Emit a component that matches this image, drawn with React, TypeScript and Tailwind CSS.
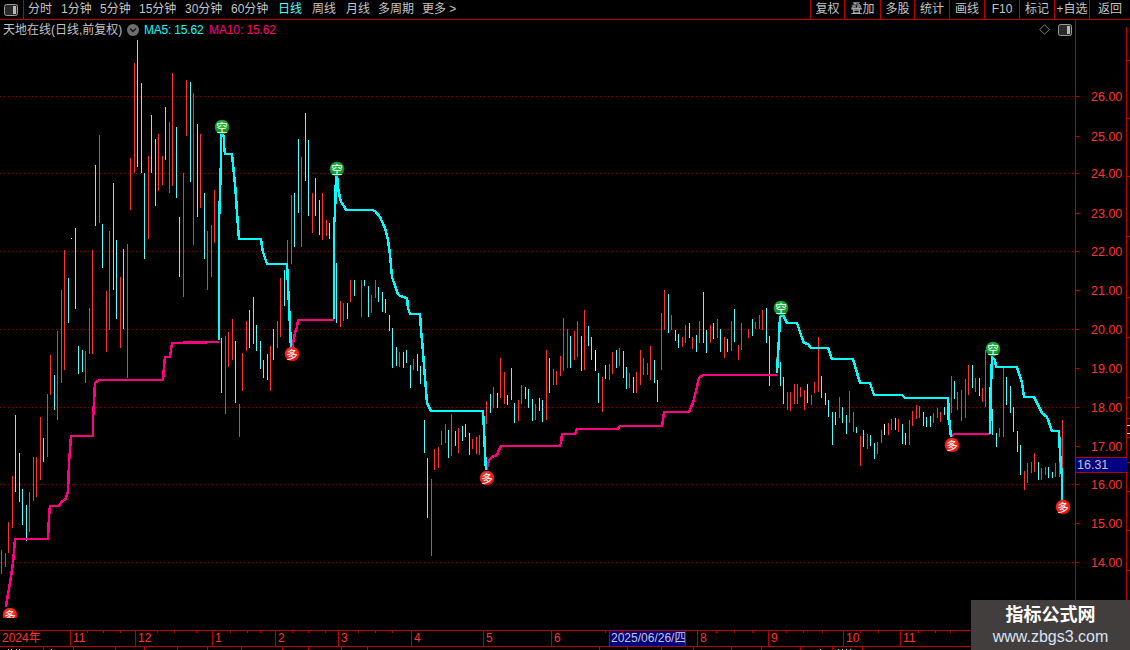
import React from "react";

type Wick = [number, number, number, string];

const leftTabs = [
  { label: "分时", cls: "w-[33px] text-[#c4c4c4]" },
  { label: "1分钟", cls: "w-[39px] text-[#c4c4c4]" },
  { label: "5分钟", cls: "w-[39px] text-[#c4c4c4]" },
  { label: "15分钟", cls: "w-[46px] text-[#c4c4c4]" },
  { label: "30分钟", cls: "w-[46px] text-[#c4c4c4]" },
  { label: "60分钟", cls: "w-[47px] text-[#c4c4c4]" },
  { label: "日线", cls: "w-[34px] text-[#54fcfc]" },
  { label: "周线", cls: "w-[34px] text-[#c4c4c4]" },
  { label: "月线", cls: "w-[32px] text-[#c4c4c4]" },
  { label: "多周期", cls: "w-[44px] text-[#c4c4c4]" },
  { label: "更多 >", cls: "w-[40px] text-[#c4c4c4]" },
];

const rightTabs = [
  { label: "复权", cls: "w-[34px]" },
  { label: "叠加", cls: "w-[36px]" },
  { label: "多股", cls: "w-[34px]" },
  { label: "统计", cls: "w-[35px]" },
  { label: "画线", cls: "w-[35px]" },
  { label: "F10", cls: "w-[35px]" },
  { label: "标记", cls: "w-[35px]" },
  { label: "+自选", cls: "w-[35px]" },
  { label: "返回", cls: "w-[41px]" },
];

const dateCells = [
  { label: "2024年", cls: "w-[71px]" },
  { label: "11", cls: "w-[65px]" },
  { label: "12", cls: "w-[77px]" },
  { label: "1", cls: "w-[63px]" },
  { label: "2", cls: "w-[63px]" },
  { label: "3", cls: "w-[73px]" },
  { label: "4", cls: "w-[72px]" },
  { label: "5", cls: "w-[68px]" },
  { label: "6", cls: "w-[58px]" },
  { label: "2025/06/26/四", cls: "w-[76px] bg-[#000080] !text-[#c8c8c8] !pl-[1px]" },
  { label: "", cls: "w-[12px]" },
  { label: "8", cls: "w-[71px]" },
  { label: "9", cls: "w-[75px]" },
  { label: "10", cls: "w-[57px]" },
  { label: "11", cls: "w-[229px]" },
];

const axisLabels: [string, number][] = [
  ["26.00", 96],
  ["25.00", 136],
  ["24.00", 173],
  ["23.00", 213],
  ["22.00", 251],
  ["21.00", 290],
  ["20.00", 329],
  ["19.00", 368],
  ["18.00", 407],
  ["17.00", 446],
  ["16.00", 484],
  ["15.00", 523],
  ["14.00", 562],
];

// absolute px
const wicksA: Wick[] = [
  [1, 550, 574, "r"], [5, 553, 567, "r"], [8, 522, 553, "r"], [12, 476, 528, "r"], [15, 415, 492, "c"],
  [19, 453, 502, "c"], [22, 489, 525, "c"], [26, 505, 541, "c"], [29, 492, 532, "r"], [33, 457, 501, "r"],
  [36, 457, 497, "r"], [40, 417, 480, "r"], [43, 438, 462, "c"], [47, 394, 457, "r"], [50, 355, 395, "r"],
  [54, 375, 410, "c"], [57, 331, 420, "r"], [61, 290, 383, "r"], [64, 250, 370, "r"], [68, 278, 323, "c"],
  [71, 238, 239, "w"], [75, 228, 309, "c"], [78, 346, 374, "c"], [82, 350, 372, "c"], [85, 351, 383, "r"],
  [89, 308, 354, "r"], [92, 250, 354, "r"], [95, 165, 226, "c"], [99, 135, 223, "r"], [102, 224, 268, "c"],
  [106, 291, 352, "r"], [109, 231, 330, "r"], [113, 183, 290, "c"], [116, 240, 319, "c"], [120, 277, 348, "r"],
  [123, 249, 329, "c"], [127, 244, 378, "r"], [130, 158, 210, "r"], [134, 63, 173, "r"], [137, 40, 167, "c"],
  [141, 83, 173, "c"], [144, 173, 259, "c"], [148, 156, 239, "r"], [151, 115, 173, "c"], [155, 139, 206, "c"],
  [158, 134, 191, "r"], [162, 156, 185, "r"], [165, 107, 160, "c"], [169, 122, 193, "r"], [172, 73, 186, "r"],
  [176, 127, 198, "c"], [179, 217, 277, "c"], [183, 173, 297, "r"], [186, 80, 136, "r"], [190, 82, 182, "c"],
  [193, 93, 245, "r"], [197, 124, 217, "c"], [200, 134, 208, "r"], [204, 193, 259, "c"], [207, 231, 290, "r"],
  [211, 225, 277, "r"], [214, 190, 243, "r"], [221, 338, 393, "c"], [225, 336, 414, "r"], [228, 332, 367, "r"],
  [232, 319, 360, "r"], [235, 341, 403, "c"], [239, 404, 437, "r"], [242, 353, 391, "r"], [246, 321, 351, "r"],
  [249, 310, 348, "c"], [253, 297, 344, "c"], [256, 325, 351, "c"], [260, 341, 369, "c"], [263, 360, 378, "c"],
  [267, 354, 380, "c"], [270, 346, 391, "r"], [273, 329, 360, "c"], [277, 321, 348, "r"], [280, 278, 337, "r"],
  [284, 270, 306, "c"], [287, 240, 293, "r"], [291, 195, 264, "r"], [294, 193, 247, "c"], [298, 139, 213, "c"],
  [301, 157, 247, "r"], [305, 113, 181, "c"], [308, 140, 216, "c"], [312, 193, 233, "r"], [315, 178, 216, "c"],
  [319, 200, 235, "c"], [322, 193, 240, "r"], [326, 220, 236, "r"], [329, 223, 239, "c"], [336, 263, 323, "c"],
  [340, 301, 327, "r"], [343, 303, 321, "r"], [347, 303, 319, "c"],
];

// measured on a 3x crop from (340,280)
const wicksB: Wick[] = [
  [30, 0, 65, "r"], [42, 0, 47, "c"], [63, 0, 110, "r"], [72, 0, 18, "c"], [85, 18, 110, "c"], [94, 45, 100, "r"],
  [105, 0, 55, "r"], [115, 20, 65, "c"], [127, 35, 95, "c"], [136, 57, 100, "c"], [148, 105, 152, "c"],
  [157, 145, 263, "c"], [168, 200, 258, "c"], [178, 215, 262, "r"], [190, 215, 265, "c"], [199, 210, 250, "c"],
  [211, 255, 325, "c"], [220, 237, 270, "r"], [232, 222, 272, "c"], [241, 258, 312, "c"], [253, 420, 520, "c"],
  [262, 535, 715, "c"], [274, 598, 828, "r"], [283, 507, 570, "r"], [295, 500, 565, "r"], [304, 453, 495, "r"],
  [316, 433, 488, "r"], [325, 450, 533, "c"], [334, 402, 528, "r"], [346, 453, 498, "c"], [355, 443, 518, "r"],
  [367, 438, 483, "c"], [376, 432, 470, "c"], [388, 460, 525, "c"], [397, 477, 507, "r"], [408, 470, 522, "r"],
  [418, 465, 525, "r"], [439, 363, 433, "r"], [451, 342, 398, "c"], [460, 321, 385, "r"], [472, 338, 385, "c"],
  [481, 235, 353, "r"], [493, 275, 373, "r"], [502, 345, 375, "c"], [514, 265, 360, "c"], [523, 370, 428, "c"],
  [535, 360, 423, "r"], [544, 316, 372, "r"], [556, 322, 357, "c"], [565, 328, 383, "c"], [577, 357, 422, "c"],
  [586, 372, 420, "r"], [598, 355, 392, "c"], [607, 360, 425, "c"], [619, 210, 420, "r"], [628, 235, 338, "c"],
  [640, 267, 315, "r"], [649, 273, 315, "r"], [661, 228, 288, "r"], [670, 114, 272, "r"], [682, 148, 265, "r"],
  [691, 168, 265, "c"], [703, 152, 240, "r"], [712, 122, 230, "r"], [724, 168, 272, "c"], [733, 90, 270, "r"],
  [745, 138, 198, "c"], [754, 172, 240, "c"], [766, 210, 272, "w"], [775, 278, 368, "c"], [787, 292, 395, "r"],
  [796, 255, 298, "c"], [808, 252, 300, "r"], [817, 216, 282, "r"], [829, 210, 265, "c"], [838, 205, 257, "r"],
  [850, 213, 293, "c"], [859, 262, 327, "c"], [868, 280, 325, "r"], [880, 292, 338, "c"], [889, 275, 340, "r"],
  [901, 210, 315, "r"], [910, 235, 285, "r"], [922, 250, 285, "r"], [931, 198, 300, "r"], [943, 240, 310, "c"],
  [952, 300, 365, "c"], [964, 98, 270, "r"], [973, 30, 150, "r"], [985, 42, 158, "c"], [994, 105, 150, "r"],
  [1006, 150, 182, "c"], [1015, 162, 203, "c"],
];

// measured on a 3x crop from (680,280)
const wicksC: Wick[] = [
  [6, 170, 202, "r"], [16, 135, 190, "r"], [28, 130, 175, "c"], [37, 170, 208, "r"], [49, 165, 215, "c"],
  [58, 123, 188, "r"], [70, 35, 188, "c"], [79, 150, 218, "c"], [91, 135, 190, "r"], [100, 130, 178, "c"],
  [112, 117, 175, "r"], [121, 148, 215, "c"], [133, 170, 235, "r"], [142, 178, 215, "c"], [154, 123, 213, "r"],
  [163, 87, 185, "c"], [175, 195, 240, "r"], [184, 130, 210, "r"], [205, 148, 175, "r"], [217, 117, 168, "c"],
  [226, 125, 148, "r"], [238, 105, 148, "r"], [247, 90, 150, "r"], [259, 85, 190, "c"], [268, 168, 318, "c"],
  [289, 230, 280, "r"], [301, 245, 318, "c"], [310, 292, 373, "c"], [322, 335, 390, "r"], [331, 335, 392, "r"],
  [343, 312, 372, "r"], [352, 313, 373, "r"], [361, 322, 350, "r"], [373, 330, 390, "r"], [382, 312, 370, "c"],
  [394, 345, 375, "r"], [403, 305, 338, "r"], [415, 170, 335, "r"], [424, 288, 355, "c"], [436, 340, 375, "c"],
  [445, 360, 410, "c"], [457, 395, 495, "c"], [466, 395, 435, "c"], [478, 350, 415, "r"], [487, 380, 430, "c"],
  [499, 405, 462, "c"], [508, 333, 428, "r"], [520, 395, 455, "r"], [529, 440, 460, "c"], [541, 467, 558, "r"],
  [550, 450, 500, "c"], [562, 462, 508, "r"], [571, 465, 498, "c"], [583, 490, 537, "c"], [592, 487, 522, "r"],
  [604, 450, 490, "r"], [613, 432, 465, "w"], [625, 428, 465, "r"], [634, 418, 450, "r"], [646, 415, 450, "c"],
  [655, 418, 455, "r"], [667, 432, 492, "c"], [676, 460, 495, "c"], [688, 420, 495, "r"], [697, 392, 437, "r"],
  [709, 375, 418, "r"], [718, 378, 415, "r"], [730, 397, 437, "c"], [739, 410, 442, "c"], [751, 408, 442, "c"],
  [760, 400, 430, "r"], [772, 385, 415, "r"], [781, 395, 425, "r"], [793, 380, 405, "c"], [802, 355, 420, "c"],
  [814, 288, 400, "r"], [823, 303, 358, "c"], [832, 335, 390, "r"], [844, 330, 422, "r"], [856, 298, 415, "r"],
  [865, 255, 345, "r"], [877, 255, 325, "c"], [886, 295, 335, "r"], [898, 295, 348, "c"], [907, 325, 365, "r"],
  [916, 210, 380, "r"], [928, 320, 460, "c"], [937, 388, 465, "c"], [949, 458, 500, "c"], [958, 445, 470, "r"],
  [970, 265, 470, "r"], [979, 292, 375, "c"], [991, 318, 400, "c"], [1000, 380, 455, "c"], [1012, 453, 515, "c"],
  [1021, 495, 585, "c"], [1033, 572, 630, "r"], [1042, 548, 610, "r"], [1054, 545, 578, "r"], [1063, 520, 575, "r"],
  [1075, 545, 600, "c"], [1084, 565, 600, "r"], [1096, 560, 585, "r"], [1105, 560, 593, "c"], [1117, 575, 593, "c"],
  [1126, 550, 590, "r"], [1138, 530, 590, "r"], [1147, 420, 568, "r"],
];

const wickColor: Record<string, string> = { r: "#ff3232", c: "#54fcfc", w: "#ffffff" };

const allWicks: Wick[] = [
  ...wicksA,
  ...wicksB.map(([x, a, b, c]): Wick => [340 + Math.floor(x / 3), 280 + a / 3, 280 + b / 3, c]),
  ...wicksC.map(([x, a, b, c]): Wick => [680 + Math.floor(x / 3), 280 + a / 3, 280 + b / 3, c]),
];

const cyanLines = [
  "219,340 219,262 219,222 220,194 221,160 221,132 224,137 224,146 225,154 232,154 233,164 234,174 235,184 236,197 237,212 238,226 239,239 261,239 262,246 263,252 265,258 267,264 287,264 288,285 289,305 290,326 291,348",
  "334,319 334,263 334,225 335,214 336,176 338,180 338,188 340,198 341,202 344,206 346,210 372,210 375,211 380,217 385,228 388,240 390,255 392,277 393,280 398,294 400,296 407,298 408,308 410,314 420,314 421,330 422,340 423,352 424,365 425,378 426,390 427,403 429,407 431,411 483,411 484,430 485,453 486,470",
  "777,373 778,355 779,338 780,317 783,315 787,323 797,323 802,338 804,343 808,344 811,348 828,348 832,359 853,359 860,383 870,383 874,395 902,395 905,398 948,398 949,418 951,437",
  "990,434 991,387 992,357 995,360 996,367 1017,367 1022,383 1024,397 1034,397 1042,413 1047,417 1052,431 1059,431 1060,453 1062,477 1062,500",
];

const pinkLines = [
  "6,607 7,600 10,583 13,563 15,539 48,539 49,517 50,506 59,506 62,501 65,500 68,492 69,463 71,436 93,436 93,420 95,383 99,380 163,380 164,367 165,357 170,357 172,343 219,342",
  "292,348 295,333 297,327 298,320 334,320",
  "486,470 487,468 489,460 492,457 497,455 499,450 501,446 560,446 561,443 562,434 564,434 575,434 577,429 618,429 620,426 662,426 663,420 664,412 689,412 693,403 697,387 699,378 703,375 777,375",
  "951,437 954,434 990,434",
];

const markers: { x: number; y: number; kind: "up" | "down" }[] = [
  { x: 222, y: 127, kind: "up" },
  { x: 337, y: 169, kind: "up" },
  { x: 781, y: 308, kind: "up" },
  { x: 993, y: 349, kind: "up" },
  { x: 292, y: 354, kind: "down" },
  { x: 487, y: 478, kind: "down" },
  { x: 952, y: 445, kind: "down" },
  { x: 1063, y: 507, kind: "down" },
  { x: 10, y: 615, kind: "down" },
];

const bottomTicks = [43, 73, 115, 144, 177, 207, 241, 282, 308, 341, 367, 599, 627, 661, 693, 731, 761, 800, 832, 862];
const dateTicks = [87, 103, 120, 157, 174, 196, 230, 247, 260, 292, 308, 325, 358, 375, 392];
const dateTicks2 = [605, 622, 716, 734, 752, 786, 803, 822, 860, 878, 918, 935, 950];
// tops of the characters in the row cut off by the window
const specks: [number, string][] = [
  [8, "#c8c8c8"], [11, "#c8c8c8"], [16, "#c8c8c8"], [19, "#c8c8c8"], [51, "#c8c8c8"],
  [820, "#c8c8c8"], [838, "#54fcfc"], [842, "#54fcfc"], [846, "#54fcfc"], [850, "#54fcfc"],
];

const PanelIcon = () => (
  <svg width="14" height="12" viewBox="0 0 14 12">
    <rect x="0.5" y="0.5" width="13" height="11" rx="2" fill="#2a2a2a" stroke="#9a9a9a" />
    <rect x="9" y="2" width="3" height="8" fill="#b8b8b8" />
  </svg>
);

const App = () => {
  return (
    <div className="relative w-[1130px] h-[650px] overflow-hidden bg-black font-['Liberation_Sans','Noto_Sans_CJK_SC',sans-serif]">
      {/* top toolbar */}
      <div className="flex h-[20px] border-b border-[#b80000] text-[12px] leading-[19px]">
        <div className="flex w-[24px] items-center justify-center border-r border-[#b80000] pr-[1px]">
          <PanelIcon />
        </div>
        <div className="flex pl-[4px]">
          {leftTabs.map((t) => (
            <span key={t.label} className={t.cls}>
              {t.label}
            </span>
          ))}
        </div>
        <div className="ml-auto flex">
          {rightTabs.map((t) => (
            <span key={t.label} className={`border-l border-[#b80000] text-center text-[#c4c4c4] ${t.cls}`}>
              {t.label}
            </span>
          ))}
        </div>
      </div>

      {/* chart + price axis */}
      <div className="flex h-[610px]">
        <div className="flex w-[1075px] flex-col">
          <div className="flex h-[19px] items-center text-[12px]">
            <span className="ml-[3px] w-[124px] text-[#c4c4c4]">天地在线(日线,前复权)</span>
            <span className="flex h-[12px] w-[12px] items-center justify-center rounded-full bg-[#6e6e6e]">
              <svg width="8" height="6" viewBox="0 0 8 6">
                <path d="M1 1.5 L4 4.5 L7 1.5" fill="none" stroke="#111" strokeWidth="1.3" />
              </svg>
            </span>
            <span className="ml-[5px] w-[65px] tracking-[-0.2px] text-[#00ffff]">MA5: 15.62</span>
            <span className="tracking-[-0.1px] text-[#ff0080]">MA10: 15.62</span>
            <span className="ml-auto flex items-center gap-[8px] pr-[3px]">
              <svg width="11" height="11" viewBox="0 0 11 11">
                <path d="M5.5 0.7 L10.3 5.5 L5.5 10.3 L0.7 5.5 Z" fill="none" stroke="#7a7a7a" />
              </svg>
              <PanelIcon />
            </span>
          </div>
          <svg width="1075" height="591" viewBox="0 39 1075 591" className="block">
            <defs>
              <clipPath id="plot">
                <rect x="0" y="39" width="1075" height="579" />
              </clipPath>
              <radialGradient id="greenBall" cx="45%" cy="40%" r="60%">
                <stop offset="0%" stopColor="#27c33f" />
                <stop offset="100%" stopColor="#0d8a22" />
              </radialGradient>
              <radialGradient id="redBall" cx="45%" cy="40%" r="60%">
                <stop offset="0%" stopColor="#ff4a3c" />
                <stop offset="100%" stopColor="#e00b0b" />
              </radialGradient>
            </defs>
            {[96, 173, 251, 329, 407, 484, 562].map((y) => (
              <line
                key={y}
                x1="0"
                x2="1075"
                y1={y + 0.5}
                y2={y + 0.5}
                stroke="#8c0000"
                strokeDasharray="1 3"
                shapeRendering="crispEdges"
              />
            ))}
            <g shapeRendering="crispEdges">
              {allWicks.map(([x, a, b, c], i) => (
                <line key={i} x1={x + 0.5} x2={x + 0.5} y1={a} y2={b} stroke={wickColor[c]} />
              ))}
            </g>
            <g fill="none" strokeWidth="2.5" shapeRendering="crispEdges">
              {pinkLines.map((p, i) => (
                <polyline key={i} points={p} stroke="#ff0080" />
              ))}
              {cyanLines.map((p, i) => (
                <polyline key={i} points={p} stroke="#00ffff" />
              ))}
            </g>
            <g clipPath="url(#plot)">
              {markers.map((m) => (
                <g key={`${m.x}-${m.y}`}>
                  <circle cx={m.x} cy={m.y} r="7.3" fill={m.kind === "up" ? "url(#greenBall)" : "url(#redBall)"} />
                  <text
                    x={m.x}
                    y={m.y + 4.5}
                    textAnchor="middle"
                    fontSize="11.5"
                    fill="#ffffff"
                    fontFamily="'Noto Sans CJK SC', sans-serif"
                  >
                    {m.kind === "up" ? "空" : "多"}
                  </text>
                </g>
              ))}
            </g>
          </svg>
        </div>

        {/* price axis */}
        <div className="relative w-[55px] border-l border-[#b80000]">
          <svg width="54" height="610" viewBox="1076 20 54 610" className="block">
            {axisLabels.map(([label, y]) => (
              <g key={label}>
                <line x1="1076" x2="1079" y1={y + 0.5} y2={y + 0.5} stroke="#b80000" />
                <text x="1091" y={y + 4.5} fontSize="12.5" fill="#ff3232" fontFamily="'Liberation Sans', sans-serif">
                  {label}
                </text>
              </g>
            ))}
            <line x1="1126.5" x2="1126.5" y1="27" y2="630" stroke="#b80000" />
            {[60, 118, 176, 236, 297, 337, 397, 418, 437, 462, 491, 530, 570, 610].map((y) => (
              <line key={y} x1="1127" x2="1130" y1={y + 0.5} y2={y + 0.5} stroke="#b80000" />
            ))}
            {[425, 433].map((y) => (
              <line key={y} x1="1127" x2="1130" y1={y + 0.5} y2={y + 0.5} stroke="#c8c8c8" />
            ))}
          </svg>
          {/* last price tag */}
          <div className="absolute left-0 top-[437px] flex h-[16px] w-[51px] items-center border-y border-[#b80000] bg-[#000080] pl-[1px] text-[12.5px] text-[#c0c0c0]">
            16.31
          </div>
        </div>
      </div>

      {/* date axis */}
      <div className="relative flex h-[17px] border-y border-[#b80000] text-[12px] leading-[15px]">
        {dateCells.map((c, i) => (
          <span
            key={i}
            className={`overflow-hidden whitespace-nowrap border-r border-[#b80000] pl-[2px] text-[#ff3232] ${c.cls}`}
          >
            {c.label}
          </span>
        ))}
        <svg width="1130" height="3" className="absolute left-0 top-0">
          {[...dateTicks, ...dateTicks2].map((x) => (
            <line key={x} x1={x + 0.5} x2={x + 0.5} y1="0" y2="2" stroke="#b80000" />
          ))}
        </svg>
      </div>

      {/* sliver of the next row */}
      <svg width="1130" height="3" className="block">
        {bottomTicks.map((x) => (
          <line key={x} x1={x + 0.5} x2={x + 0.5} y1="0" y2="3" stroke="#b80000" />
        ))}
        {specks.map(([x, color]) => (
          <line key={x} x1={x + 0.5} x2={x + 0.5} y1="2" y2="3" stroke={color} />
        ))}
      </svg>

      {/* site watermark */}
      <div className="absolute bottom-0 right-0 flex h-[50px] w-[159px] flex-col items-center bg-[#433e3e] pt-[3px]">
        <span className="text-[18px] font-bold leading-[25px] text-white">指标公式网</span>
        <span className="text-[16px] leading-[18px] text-[#d6e4f4]">www.zbgs3.com</span>
      </div>
    </div>
  );
};

export default App;
